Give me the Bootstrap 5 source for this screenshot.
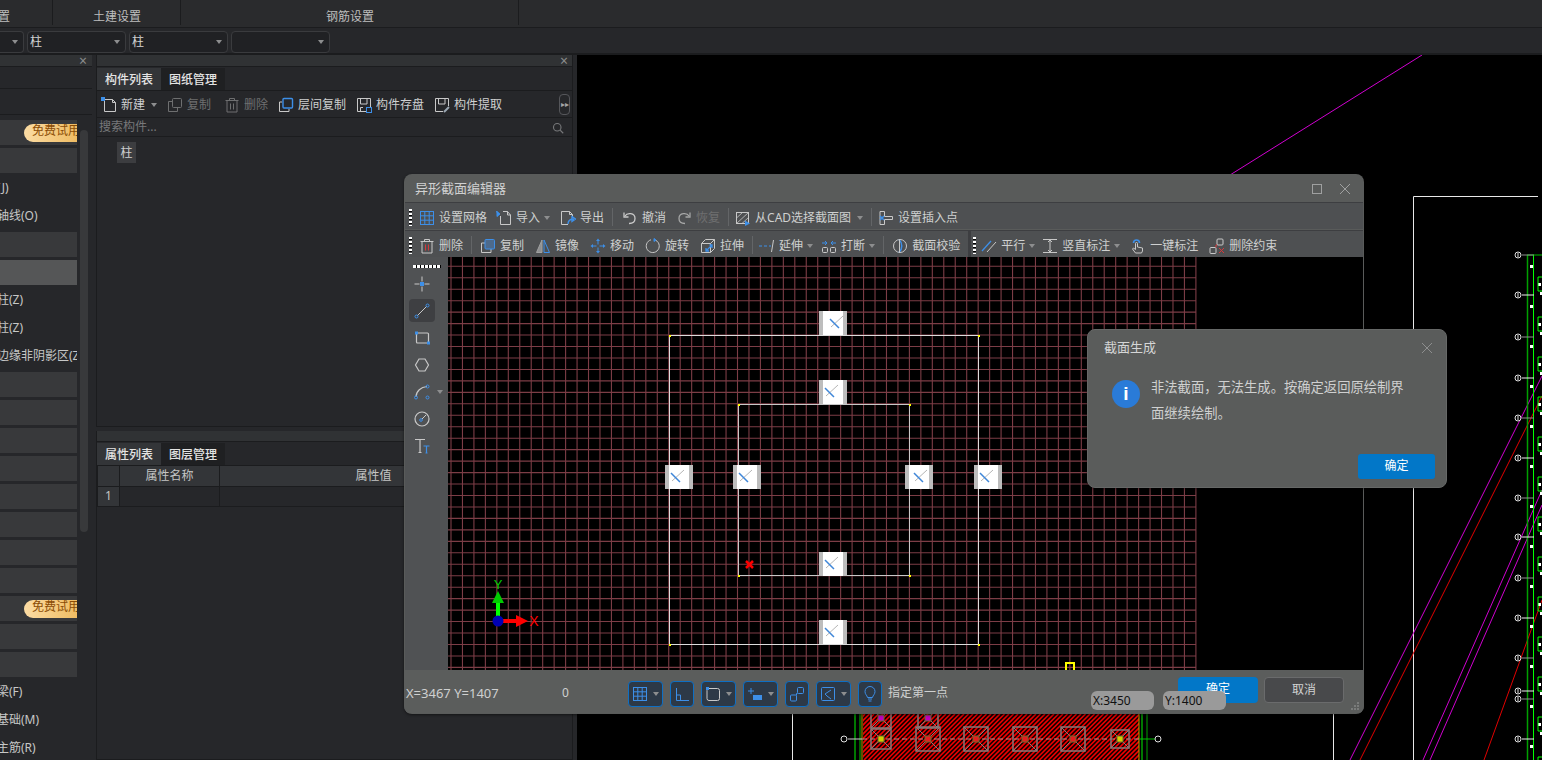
<!DOCTYPE html>
<html lang="zh-CN">
<head>
<meta charset="UTF-8" />
<title>异形截面编辑器</title>
<link href="https://cdn.jsdelivr.net/npm/bootstrap@5.3.0/dist/css/bootstrap.min.css" rel="stylesheet" />
<style>
  html, body { height: 760px; overflow: hidden; }
  body { background: #26272a; color: #cfd0d0; font: 12px/1.2 "Noto Sans", "Noto Sans CJK SC", sans-serif; }
  svg.ic { width: 16px; height: 16px; flex: none; fill: none; stroke: #c8c8c8; stroke-width: 1; }
  .app-root { position: relative; width: 1542px; height: 760px; overflow: hidden; }
  .top-tabs { height: 28px; background: #2a2b2d; border-bottom: 1px solid #1b1c1e; }
  .top-tabs > div { height: 25px; padding: 10px 0 0 1px; text-align: center; border-right: 1px solid #1b1c1e; color: #bdbebe; }
  .sel-row { height: 27px; gap: 3px; background: #26272a; border-bottom: 2px solid #1b1c1e; padding-top: 3px; }
  .fake-sel { height: 22px; width: 99px; background: #202124; border: 1px solid #3a3b3e; border-radius: 4px; padding: 0 5px 0 2px; color: #d5d5d5; }
  .fake-sel.first { width: 24px; border-left: 0; border-radius: 0 4px 4px 0; }
  .caret-s { width: 0; height: 0; border: 3px solid transparent; border-top: 4px solid #8d8e8f; border-bottom: 0; flex: none; }
  .main-row { height: 705px; gap: 4px; }
  .left-pane { width: 92px; }
  .left-pane > * { flex: none; }
  .pane-title { height: 12px; background: #303234; border-bottom: 1px solid #1b1c1e; color: #8b8c8d; padding-right: 4px; font-size: 14px; line-height: 11px; }
  .left-head { height: 26px; border-bottom: 1px solid #1b1c1e; }
  .left-rows { width: 77px; padding-top: 5px; }
  .left-item { height: 25px; margin-bottom: 3px; background: #38393b; overflow: hidden; white-space: nowrap; }
  .left-item.plain { background: transparent; color: #c6c7c7; }
  .left-item.on { background: #555657; }
  .cut-txt { margin-left: -3px; }
  .try-badge { width: 53px; height: 18px; padding-left: 8px; background: linear-gradient(90deg, #fbdca4, #efbc63); border-radius: 9px 0 0 9px; color: #8b4c05; overflow: hidden; white-space: nowrap; }
  .left-thumb { width: 8px; height: 402px; margin: 15px 0 0 3px; background: #38393b; border-radius: 4px; }
  .mid-col { width: 477px; gap: 4px; }
  .mid-pane { border: 1px solid #1b1c1e; border-width: 0 1px 1px 1px; }
  .tab-row { height: 23px; border-bottom: 1px solid #1b1c1e; margin-top: 1px; }
  .tab-on, .tab-off { width: 64px; text-align: center; line-height: 23px; color: #e4e4e4; font-weight: 500; }
  .tab-on { background: #333538; }
  .tab-off { background: #1f2022; }
  .mid-tools { height: 27px; gap: 10px; padding: 2px 0 0 4px; border-bottom: 1px solid #1b1c1e; }
  .tool { gap: 4px; white-space: nowrap; }
  .tool.off { color: #6e6f70; }
  .more-btn { width: 11px; height: 21px; border: 1px solid #55565a; border-radius: 4px; color: #a5a5a5; font-size: 8px; line-height: 18px; text-align: center; margin: -2px 2px 0 0; }
  .search-row { height: 19px; padding: 1px 8px 0 2px; border-bottom: 1px solid #1b1c1e; color: #77787a; }
  .comp-chip { width: 19px; height: 21px; margin: 5px 0 0 20px; background: #3c3d40; text-align: center; line-height: 21px; }
  .prop-table { border-collapse: collapse; width: 100%; }
  .prop-table td, .prop-table th { height: 20px; padding: 0; border: 1px solid #1b1c1e; border-top: 0; text-align: center; font-weight: 400; color: #c4c5c5; }
  .prop-table .rownum { width: 22px; background: #333538; }
  .prop-table th { background: #333538; }
  .cad-area { background: #000; position: relative; overflow: hidden; }
  .cad-area svg { position: absolute; left: 0; top: 0; }
  .shape-win { position: absolute; left: 404px; top: 174px; width: 960px; height: 540px; background: #595b5a; border-radius: 8px; box-shadow: 0 1px 3px rgba(0,0,0,.5); overflow: hidden; }
  .win-title { height: 29px; padding: 0 13px 0 11px; color: #d0d1d1; font-size: 13px; }
  .win-ctl { stroke: #9fa0a0; fill: none; }
  .tool-row { height: 26px; margin: 0 1px 2px 1px; gap: 8px; padding: 4px 0 0 4px; background: #4e5052; box-shadow: 0 -1px 0 #3d3e41; }
  .tool-row.wide { gap: 9px; }
  .grip-dots { width: 3px; height: 17px; flex: none; margin-top: -2px; background: repeating-linear-gradient(180deg, #fff 0 2px, #000 2px 3px, transparent 3px 4px); }
  .grip-first { margin-right: -2px; }
  .grip-flat { margin-right: -1px; }
  .grip-second { margin-right: -3px; }
  .tb-sep { width: 1px; height: 18px; background: #636567; flex: none; margin-top: -2px; }
  .wide .tb-sep { margin-left: -1px; }
  .tb-break { width: 3px; height: 26px; background: #3d3e41; flex: none; margin: -4px -6px 0 0; }
  .sp1 { margin-left: 1px; }
  .sp2 { margin-left: 2px; }
  .sp3 { margin-left: 3px; }
  .pull1 { margin-left: -1px; }
  .pull2 { margin-left: -2px; }
  .pull3 { margin-left: -3px; }
  .canvas-row { height: 413px; margin: -2px 1px 0 1px; }
  .tool-strip { width: 43px; background: #505254; flex: none; padding-top: 8px; }
  .strip-dots { height: 3px; width: 28px; margin: 0 0 2px 8px; background: repeating-linear-gradient(90deg, #fff 0 3px, #000 3px 4px); }
  .strip-btn { height: 27px; width: 26px; margin-left: 4px; position: relative; }
  .strip-btn.on { background: #3e3f42; border-radius: 4px; height: 23px; margin: 2px 0 2px 4px; }
  .strip-caret { position: absolute; left: 28px; top: 12px; }
  .stat-row { height: 43px; padding-top: 4px; background: #5b5d5c; position: relative; }
  .stat-xy { margin-left: 2px; width: 156px; font-size: 13px; }
  .stat-btns { gap: 7px; }
  .stat-btn { height: 26px; padding: 0 3px; gap: 5px; background: #2d3947; border: 1px solid #0e6fc4; border-radius: 4px; }
  .stat-btn svg.ic { stroke: #3d8fe8; }
  .stat-hint { margin-left: 6px; }
  .stat-acts { gap: 6px; margin: -8px 20px 0 auto; }
  .btn-ok, .btn-no { width: 80px; height: 26px; line-height: 24px; text-align: center; border-radius: 4px; font-size: 12px; }
  .btn-ok { background: #0277c8; color: #fff; }
  .btn-no { background: #48494b; border: 1px solid #6a6b6c; color: #d2d2d2; }
  .coord-tip { position: absolute; top: 21px; width: 63px; height: 19px; padding-left: 2px; background: #9a9a9a; border-radius: 6px; color: #111; line-height: 19px; }
  .size-grip { position: absolute; right: 4px; bottom: 2px; }
  .msg-box { position: absolute; left: 1087px; top: 329px; width: 360px; height: 159px; background: #5a5c5b; border: 1px solid #666867; border-radius: 8px; color: #cfd0d0; box-shadow: 0 1px 3px rgba(0,0,0,.4); }
  .msg-title { height: 36px; padding: 0 13px 0 16px; font-size: 13px; color: #d5d6d6; }
  .msg-body { height: 88px; padding: 12px 10px 0 24px; gap: 11px; }
  .msg-icon { width: 28px; height: 28px; border-radius: 50%; background: #2a7bd8; color: #fff; font: 700 19px/28px "Liberation Sans", sans-serif; text-align: center; margin-top: 2px; }
  .msg-text { line-height: 26px; font-size: 13.3px; margin-top: -4px; max-width: 262px; }
  .msg-foot { padding-right: 11px; }
  .msg-foot .btn-ok { width: 77px; height: 25px; border-radius: 3px; }
</style>
</head>
<body>
<div class="app-root d-flex flex-column">
  <div class="top-tabs d-flex flex-none">
    <div style="width:53px"><span class="cut-txt d-block text-start">置</span></div>
    <div style="width:128px">土建设置</div>
    <div style="width:338px">钢筋设置</div>
  </div>
  <div class="sel-row d-flex flex-none">
    <div class="fake-sel first d-flex align-items-center justify-content-end"><i class="caret-s"></i></div>
    <div class="fake-sel d-flex align-items-center justify-content-between">柱<i class="caret-s"></i></div>
    <div class="fake-sel d-flex align-items-center justify-content-between">柱<i class="caret-s"></i></div>
    <div class="fake-sel d-flex align-items-center justify-content-end"><i class="caret-s"></i></div>
  </div>

  <div class="main-row d-flex">
    <div class="left-pane d-flex flex-column flex-none">
      <div class="pane-title text-end" style="padding-right:5px">×</div>
      <div class="left-head" style="height:22px"></div>
      <div class="left-head"></div>
      <div class="d-flex">
        <div class="left-rows" id="leftRows"></div>
        <div class="left-thumb"></div>
      </div>
    </div>

    <div class="mid-col d-flex flex-column flex-none">
      <div class="mid-pane" style="height:372px">
        <div class="pane-title text-end">×</div>
        <div class="tab-row d-flex"><div class="tab-on">构件列表</div><div class="tab-off">图纸管理</div></div>
        <div class="mid-tools d-flex align-items-center">
          <span class="tool d-flex align-items-center">
            <svg class="ic" viewBox="0 0 16 16"><path d="M3.5 2.5h8l3 3v9h-11z"/><path d="M11.5 2.5v3h3" /><rect x="0" y="0" width="4" height="4" fill="#3d8fe8" stroke="none"/></svg>新建<i class="caret-s sp2"></i>
          </span>
          <span class="tool off d-flex align-items-center">
            <svg class="ic" viewBox="0 0 16 16" style="stroke:#6e6f70"><rect x="5.5" y="1.5" width="9" height="9" rx="1"/><path d="M5 4.5H1.5v10h9V11"/></svg>复制
          </span>
          <span class="tool off d-flex align-items-center sp3">
            <svg class="ic" viewBox="0 0 16 16" style="stroke:#6e6f70"><path d="M1.5 3.5h13M5.5 3V1.5h5V3M3 4v11h10V4M6.5 6.5v6M9.5 6.5v6"/></svg>删除
          </span>
          <span class="tool d-flex align-items-center">
            <svg class="ic" viewBox="0 0 16 16"><path d="M4 5H1.5v9.5H11V12"/><rect x="5" y="1.5" width="9.5" height="9.5" rx="1" stroke="#3d8fe8" stroke-width="1.4"/></svg>层间复制
          </span>
          <span class="tool d-flex align-items-center">
            <svg class="ic" viewBox="0 0 16 16"><path d="M10 14.5H1.5v-13h13V10"/><path d="M4.5 2v5h6.5V2M7 10.5H4.5v4"/><rect x="10.5" y="10.5" width="5" height="5" stroke="#3d8fe8"/></svg>构件存盘
          </span>
          <span class="tool d-flex align-items-center">
            <svg class="ic" viewBox="0 0 16 16"><path d="M9 14.5H1.5v-13h13V9"/><path d="M4.5 2v5h6.5V2"/><path d="M15 10l-5 5" stroke="#9aa6b2" stroke-width="2"/></svg>构件提取
          </span>
          <div class="more-btn ms-auto">▸▸</div>
        </div>
        <div class="search-row d-flex align-items-center justify-content-between">搜索构件...
          <svg class="ic" viewBox="0 0 16 16" style="stroke:#77787a;width:12px;height:12px"><circle cx="7" cy="7" r="5" stroke-width="1.5"/><path d="M11 11l4 4" stroke-width="1.5"/></svg>
        </div>
        <div class="comp-chip">柱</div>
      </div>
      <div class="mid-pane flex-grow-1">
        <div class="pane-title" style="height:11px"></div>
        <div class="tab-row d-flex"><div class="tab-on">属性列表</div><div class="tab-off">图层管理</div></div>
        <table class="prop-table">
          <tr><th class="rownum"></th><th style="width:100px">属性名称</th><th style="padding-right:44px">属性值</th></tr>
          <tr><td class="rownum">1</td><td></td><td></td></tr>
        </table>
      </div>
    </div>

    <div class="cad-area flex-grow-1">
      <svg id="cadBack" width="965" height="705" viewBox="577 55 965 705"></svg>
    </div>
  </div>

  <!-- section editor window -->
  <div class="shape-win d-flex flex-column">
    <div class="win-title d-flex align-items-center justify-content-between flex-none">
      <span>异形截面编辑器</span>
      <span class="d-flex gap-3">
        <svg width="12" height="12" viewBox="0 0 12 12" class="win-ctl"><rect x="1.5" y="1.5" width="9" height="9"/></svg>
        <svg width="12" height="12" viewBox="0 0 12 12" class="win-ctl"><path d="M1 1l10 10M11 1L1 11"/></svg>
      </span>
    </div>

    <div class="tool-row wide d-flex align-items-center flex-none">
      <i class="grip-dots grip-first"></i>
      <span class="tool d-flex align-items-center">
        <svg class="ic" viewBox="0 0 16 16" style="stroke:#3d8fe8"><rect x="1.5" y="1.5" width="13" height="13"/><path d="M5.8 1.5v13M10.2 1.5v13M1.5 5.8h13M1.5 10.2h13"/></svg>设置网格
      </span>
      <span class="tool d-flex align-items-center">
        <svg class="ic" viewBox="0 0 16 16"><path d="M4.5 6v8.5h10V5l-3-3.5H7"/><path d="M11.5 1.5V5h3"/><path d="M1 1.5l3 2.5-3 2.5z M0 1l3 4" stroke="#3d8fe8" fill="#3d8fe8"/></svg>导入<i class="caret-s"></i>
      </span>
      <span class="tool d-flex align-items-center sp1">
        <svg class="ic" viewBox="0 0 16 16"><path d="M8 14.5H1.5v-13h8l3 3v3"/><path d="M9.5 1.5v3h3"/><path d="M8 14c0-4 3-5 6-5M12 6.5l3.5 2.5-3.5 2.5z" stroke="#3d8fe8" stroke-width="1.4"/></svg>导出
      </span>
      <i class="tb-sep"></i>
      <span class="tool d-flex align-items-center">
        <svg class="ic" viewBox="0 0 16 16"><path d="M3 6c2-3.500 10-3.500 10 2.500 0 3.500-3 5-6 5" stroke-width="1.3"/><path d="M2 2.500V7h4.500" stroke-width="1.3"/></svg>撤消
      </span>
      <span class="tool off d-flex align-items-center sp1">
        <svg class="ic" viewBox="0 0 16 16" style="stroke:#a5a6a6"><path d="M13 6C11 2.500 3 2.500 3 8.500c0 3.500 3 5 6 5" stroke-width="1.3"/><path d="M14 2.500V7H9.500" stroke-width="1.3"/></svg>恢复
      </span>
      <i class="tb-sep"></i>
      <span class="tool d-flex align-items-center pull3">
        <svg class="ic" viewBox="0 0 16 16"><rect x="1.5" y="2.5" width="12" height="11"/><path d="M1.5 13.5l12-11M1.500 8l6-5.500M7 13.500l6.500-6" stroke-width=".8"/><path d="M10 10.500l5 3-5 2.500z" fill="#3d8fe8" stroke="none"/></svg>从CAD选择截面图<i class="caret-s sp2"></i>
      </span>
      <i class="tb-sep"></i>
      <span class="tool d-flex align-items-center pull3">
        <svg class="ic" viewBox="0 0 16 16"><path d="M2 1.500h4.500v5h8v3h-8v5H2z"/><path d="M2 6l4 4M6 6l-4 4" stroke="#3d8fe8" stroke-width="1.5"/></svg>设置插入点
      </span>
    </div>

    <div class="tool-row d-flex align-items-center flex-none">
      <i class="grip-dots grip-flat"></i>
      <span class="tool d-flex align-items-center">
        <svg class="ic" viewBox="0 0 16 16"><path d="M1.500 3.500h13M5.500 3V1.500h5V3M3 4v11h10V4"/><path d="M6.500 6.500v6M9.500 6.500v6" stroke="#d8383c"/></svg>删除
      </span>
      <i class="tb-sep"></i>
      <span class="tool d-flex align-items-center">
        <svg class="ic" viewBox="0 0 16 16"><path d="M5 5H1.500v9.500H11V11"/><rect x="5" y="1.500" width="9.500" height="9.500" rx="1" fill="#4d6a8c" stroke="#3d8fe8"/></svg>复制
      </span>
      <span class="tool d-flex align-items-center sp3">
        <svg class="ic" viewBox="0 0 16 16"><path d="M7 2L1.500 14.500H7z" fill="#8f9091" stroke="#a0a1a1"/><path d="M9 2l5.500 12.500H9z" stroke="#3d8fe8"/></svg>镜像
      </span>
      <span class="tool d-flex align-items-center sp3">
        <svg class="ic" viewBox="0 0 16 16" style="stroke:#3d8fe8"><path d="M8 2.500v4M8 9.500v4M2.500 8h4M9.500 8h4"/><path d="M6 3l2-2.500L10 3zM6 13l2 2.500L10 13zM3 6L.5 8 3 10zM13 6l2.500 2L13 10z" fill="#3d8fe8" stroke="none"/></svg>移动
      </span>
      <span class="tool d-flex align-items-center sp3">
        <svg class="ic" viewBox="0 0 16 16"><path d="M9.500 1.800a6.500 6.500 0 1 1-3.500 0"/><path d="M9 .5l2 1.500-2 1.500z" fill="#3d8fe8" stroke="#3d8fe8"/></svg>旋转
      </span>
      <span class="tool d-flex align-items-center sp3">
        <svg class="ic" viewBox="0 0 16 16"><path d="M1.500 5.500h9v9h-9zM1.500 5.500l4-4h9v9l-4 4M10.500 5.500l4-4"/><path d="M6 13l6-6M6 10v3h3M9.500 7H12v3" stroke="#3d8fe8" stroke-width="1.3"/></svg>拉伸
      </span>
      <i class="tb-sep"></i>
      <span class="tool d-flex align-items-center pull2">
        <svg class="ic" viewBox="0 0 16 16"><path d="M0 8h3M5 8h3M10 8h2" stroke="#3d8fe8"/><path d="M14.500 2l-2 12"/></svg>延伸<i class="caret-s"></i>
      </span>
      <span class="tool d-flex align-items-center">
        <svg class="ic" viewBox="0 0 16 16"><rect x="1.500" y="9.500" width="5" height="5" rx="1"/><rect x="9.500" y="9.500" width="5" height="5" rx="1"/><path d="M1 5h4M4 3l2 2-2 2M15 5h-4M12 3l-2 2 2 2" stroke="#3d8fe8"/></svg>打断<i class="caret-s"></i>
      </span>
      <i class="tb-sep"></i>
      <span class="tool d-flex align-items-center">
        <svg class="ic" viewBox="0 0 16 16"><rect x="1.500" y="1.500" width="13" height="13" rx="6.500"/><path d="M7 1.500a9 9 0 0 1 0 13" stroke="#3d8fe8" stroke-width="1.5"/><path d="M7.500 1v14"/></svg>截面校验
      </span>
      <i class="tb-break"></i>
      <i class="grip-dots grip-second"></i>
      <span class="tool d-flex align-items-center">
        <svg class="ic" viewBox="0 0 16 16"><path d="M1 13L10 3" stroke="#3d8fe8" stroke-width="1.3"/><path d="M6 14l9-10"/></svg>平行<i class="caret-s"></i>
      </span>
      <span class="tool d-flex align-items-center pull1">
        <svg class="ic" viewBox="0 0 16 16"><path d="M1 1.500h14M1 14.500h14M8 2v12"/><path d="M6 4l2-2 2 2M6 12l2 2 2-2"/></svg>竖直标注<i class="caret-s"></i>
      </span>
      <span class="tool d-flex align-items-center sp2">
        <svg class="ic" viewBox="0 0 16 16"><path d="M5.500 15l-3-4 1-1 2 1.500V5.500a1 1 0 0 1 2 0V9l5 1v3l-1 2z"/><path d="M3.500 5a3 3 0 1 1 6 0" stroke="#3d8fe8" stroke-width="1.6"/></svg>一键标注
      </span>
      <span class="tool d-flex align-items-center sp3">
        <svg class="ic" viewBox="0 0 16 16"><rect x="1" y="9.500" width="6" height="6" rx="1"/><rect x="8" y="1" width="6" height="6" rx="1"/><path d="M7 9.500V7h1M10 10l5 5M15 10l-5 5" stroke="#d8383c"/></svg>删除约束
      </span>
    </div>

    <div class="canvas-row d-flex">
      <div class="tool-strip">
        <div class="strip-dots"></div>
        <div class="strip-btn d-flex align-items-center justify-content-center">
          <svg class="ic" viewBox="0 0 16 16"><path d="M8 .5v5M8 10.500v5M.5 8h5M10.500 8h5"/><rect x="6" y="6" width="4" height="4" fill="#3d8fe8" stroke="none"/></svg>
        </div>
        <div class="strip-btn on d-flex align-items-center justify-content-center">
          <svg class="ic" viewBox="0 0 16 16"><path d="M3 13L13 3"/><circle cx="2.500" cy="13.500" r="1.500" stroke="#3d8fe8"/><circle cx="13.500" cy="2.500" r="1.500" stroke="#3d8fe8"/></svg>
        </div>
        <div class="strip-btn d-flex align-items-center justify-content-center">
          <svg class="ic" viewBox="0 0 16 16"><rect x="2.500" y="3" width="12" height="10" rx="1" stroke-width="1.2"/><rect x="1.500" y="2" width="2" height="2" stroke="#3d8fe8"/><rect x="13.500" y="12" width="2" height="2" stroke="#3d8fe8"/></svg>
        </div>
        <div class="strip-btn d-flex align-items-center justify-content-center">
          <svg class="ic" viewBox="0 0 16 16"><path d="M5 2h6l3.500 6L11 14H5L1.500 8z" stroke-width="1.2"/></svg>
        </div>
        <div class="strip-btn d-flex align-items-center justify-content-center">
          <svg class="ic" viewBox="0 0 16 16"><path d="M2 13C2 7 7 3 13 2.500" stroke-width="1.2"/><circle cx="2" cy="13.500" r="1.500" stroke="#3d8fe8"/><circle cx="13.500" cy="2.500" r="1.500" stroke="#3d8fe8"/><circle cx="13.500" cy="13.500" r="1.500" stroke="#3d8fe8"/></svg>
          <i class="caret-s strip-caret"></i>
        </div>
        <div class="strip-btn d-flex align-items-center justify-content-center">
          <svg class="ic" viewBox="0 0 16 16"><circle cx="8" cy="8" r="7" stroke-width="1.2"/><path d="M8 8l4-4"/><circle cx="7" cy="9" r="1.300" stroke="#3d8fe8"/></svg>
        </div>
        <div class="strip-btn d-flex align-items-center justify-content-center">
          <svg class="ic" viewBox="0 0 16 16"><path d="M1 1.500h10M6 1.500v13M4.500 14.500h3" stroke-width="1.2"/><path d="M9.500 8h6M12.500 8v7M11.500 15h2" stroke="#3d8fe8" stroke-width="1.2"/></svg>
        </div>
      </div>
      <svg id="gridCanvas" width="915" height="413" viewBox="448 258 915 413" style="background:#000;flex:none"></svg>
    </div>

    <div class="stat-row d-flex align-items-center flex-none">
      <span class="stat-xy">X=3467 Y=1407</span>
      <span style="width:66px">0</span>
      <span class="stat-btns d-flex align-items-center">
        <span class="stat-btn d-flex align-items-center"><svg class="ic" viewBox="0 0 16 16"><rect x="1.500" y="1.500" width="13" height="13"/><path d="M5.800 1.500v13M10.200 1.500v13M1.500 5.800h13M1.500 10.200h13"/></svg><i class="caret-s"></i></span>
        <span class="stat-btn d-flex align-items-center"><svg class="ic" viewBox="0 0 16 16"><path d="M2.500 2v12.500H15M2.500 9h4v5.500"/></svg></span>
        <span class="stat-btn d-flex align-items-center"><svg class="ic" viewBox="0 0 16 16"><rect x="2" y="2.500" width="12.500" height="12" rx="2" style="stroke:#c8c8c8"/><rect x="1" y="1" width="3" height="3" fill="#3d8fe8" stroke="none"/></svg><i class="caret-s"></i></span>
        <span class="stat-btn d-flex align-items-center"><svg class="ic" viewBox="0 0 16 16"><path d="M1 5h6M4 2v6"/><rect x="6" y="9" width="9" height="5" fill="#3d8fe8" stroke="none"/></svg><i class="caret-s"></i></span>
        <span class="stat-btn d-flex align-items-center"><svg class="ic" viewBox="0 0 16 16"><rect x="1.500" y="9" width="6" height="6" rx="1"/><rect x="8.500" y="1.500" width="6" height="6" rx="1"/><path d="M7.500 9V7.500h1"/></svg></span>
        <span class="stat-btn d-flex align-items-center"><svg class="ic" viewBox="0 0 16 16"><rect x="1.500" y="1.500" width="13" height="13" rx="1"/><path d="M5 8l2 2M5 8l6-4M7 10l4 3"/></svg><i class="caret-s"></i></span>
        <span class="stat-btn d-flex align-items-center"><svg class="ic" viewBox="0 0 16 16"><path d="M5.500 11.500C5 9 3 8.500 3 5.500a5 5 0 0 1 10 0c0 3-2 3.500-2.500 6zM6 13h4M6.500 15h3"/></svg></span>
      </span>
      <span class="stat-hint">指定第一点</span>
      <span class="stat-acts d-flex">
        <span class="btn-ok">确定</span>
        <span class="btn-no">取消</span>
      </span>
      <span class="coord-tip" style="left:687px">X:3450</span>
      <span class="coord-tip" style="left:759px">Y:1400</span>
      <svg class="size-grip" width="10" height="9" viewBox="0 0 10 9" fill="#7a7c7b"><rect x="7" y="0" width="2" height="2"/><rect x="4" y="3" width="2" height="2"/><rect x="7" y="3" width="2" height="2"/><rect x="1" y="6" width="2" height="2"/><rect x="4" y="6" width="2" height="2"/><rect x="7" y="6" width="2" height="2"/></svg>
    </div>
  </div>

  <!-- message box -->
  <div class="msg-box d-flex flex-column">
    <div class="msg-title d-flex align-items-center justify-content-between">
      <span>截面生成</span>
      <svg width="12" height="12" viewBox="0 0 12 12" class="win-ctl" style="stroke:#8d8e8e"><path d="M1 1l10 10M11 1L1 11"/></svg>
    </div>
    <div class="msg-body d-flex">
      <div class="msg-icon flex-none">i</div>
      <div class="msg-text">非法截面，无法生成。按确定返回原绘制界面继续绘制。</div>
    </div>
    <div class="msg-foot d-flex justify-content-end"><span class="btn-ok">确定</span></div>
  </div>
</div>

<script>
  const leftCenters = [
    ["badge"], ["band"], ["text", "(J)"], ["text", "轴线(O)"], ["band"], ["on"],
    ["text", "柱(Z)"], ["text", "柱(Z)"], ["text", "边缘非阴影区(Z)"],
    ["band"], ["band"], ["band"], ["band"], ["band"], ["band"], ["band"], ["band"],
    ["badge"], ["band"], ["band"], ["text", "梁(F)"], ["text", "基础(M)"], ["text", "主筋(R)"],
  ];
  document.getElementById("leftRows").innerHTML = leftCenters
    .map(([kind, label]) => {
      if (kind === "badge")
        return `<div class="left-item d-flex align-items-center justify-content-end"><span class="try-badge">免费试用</span></div>`;
      if (kind === "text")
        return `<div class="left-item plain d-flex align-items-center"><span class="cut-txt">${label}</span></div>`;
      return `<div class="left-item ${kind === "on" ? "on" : ""}"></div>`;
    })
    .join("");

  // grid, section outlines and axis inside the editor
  let g = "";
  const step = 11.46;
  for (let i = 0; i <= 65; i++) {
    const x = 451 + i * step;
    g += `<line x1="${x}" y1="258" x2="${x}" y2="671" stroke="#7c3d46" stroke-width="1.1"/>`;
  }
  for (let i = 0; i <= 35; i++) {
    const y = 267.3 + i * step;
    g += `<line x1="448" y1="${y}" x2="1196" y2="${y}" stroke="#7c3d46" stroke-width="1.1"/>`;
  }
  g += `<rect x="669.5" y="336.5" width="309" height="309" fill="none" stroke="#dcdcdc"/>`;
  g += `<rect x="738.5" y="405.5" width="171" height="171" fill="none" stroke="#c8c8c8"/>`;
  [[669, 336], [978, 336], [669, 645], [978, 645], [738, 405], [909, 405], [738, 576], [909, 576]].forEach(([x, y]) => {
    g += `<rect x="${x}" y="${y}" width="2" height="2" fill="#ff0"/>`;
  });
  [[833, 324, 5], [833, 393, 0], [679, 478, 0], [747, 478, 0], [919, 478, 3], [988, 478, 0], [833, 565, 0], [833, 633, 0]].forEach(([x, y, d]) => {
    g += `<rect x="${x - 14}" y="${y - 12}" width="28" height="24" fill="#bdbdbd"/>`;
    g += `<rect x="${x - 10}" y="${y - 12}" width="20" height="24" fill="#fff"/>`;
    g += `<path d="M${x - 7 + d} ${y + 4}L${x + 5 + d} ${y - 7}" stroke="#b5b5b5"/>`;
    g += `<path d="M${x - 8 + d} ${y - 4}L${x + 1 + d} ${y + 5}" stroke="#3f86d8" stroke-width="1.5"/>`;
  });
  g += `<path d="M746 562l7 7M753 562l-7 7" stroke="#f00" stroke-width="2.5"/>`;
  g += `<rect x="1066" y="664" width="8" height="12" fill="none" stroke="#ff0" stroke-width="2"/>`;
  g += `<path d="M498 622V600" stroke="#0f0" stroke-width="4"/><path d="M492 604l6-12 6 12z" fill="#0c0"/>`;
  g += `<path d="M498 622H520" stroke="#f00" stroke-width="4"/><path d="M516 616l12 6-12 6z" fill="#f00"/>`;
  g += `<circle cx="498" cy="622" r="5.5" fill="#0000b4"/>`;
  g += `<text x="498" y="590" text-anchor="middle" fill="#0c0" font-family="Liberation Sans" font-size="13">Y</text>`;
  g += `<text x="534" y="627" text-anchor="middle" fill="#f00" font-family="Liberation Sans" font-size="14">X</text>`;
  document.getElementById("gridCanvas").innerHTML = g;

  // CAD drawing behind the windows
  let c = "";
  const ln = (x1, y1, x2, y2, col, w = 1) => `<line x1="${x1}" y1="${y1}" x2="${x2}" y2="${y2}" stroke="${col}" stroke-width="${w}"/>`;
  c += ln(1422, 55, 1230, 175, "#d000d0");
  c += `<path d="M1413.5 760V196.5H1538M792.5 714V760M1333.5 714V760" fill="none" stroke="#e8e8e8"/>`;
  c += ln(1350, 760, 1542, 376, "#d000d0") + ln(1360, 760, 1542, 396, "#e00000");
  c += ln(1423, 760, 1542, 490, "#d000d0") + ln(1430, 760, 1542, 505, "#d000d0") + ln(1484, 760, 1542, 600, "#e00000");
  c += ln(1527.5, 255, 1527.5, 760, "#00a000", 1.5) + ln(1533.5, 255, 1533.5, 760, "#00ff00");
  c += ln(1527, 255, 1542, 255, "#00c000");
  [255, 295, 337, 378, 418, 458, 498, 537, 578, 618, 658, 691, 699, 739].forEach((y, i) => {
    c += ln(1522, y, 1534, y, i % 2 ? "#f0f0f0" : "#909090");
    c += `<circle cx="1518" cy="${y}" r="3" fill="#000" stroke="#e0e0e0"/>`;
    c += `<rect x="1517.5" y="${y - 2}" width="1" height="4" fill="#e0e0e0"/>`;
  });
  for (let y = 265; y < 760; y += 40) {
    c += `<rect x="1530" y="${y}" width="3" height="3" fill="#fff"/>`;
    c += `<rect x="1538" y="${y + 18}" width="3" height="3" fill="#fff"/><rect x="1540" y="${y + 27}" width="2" height="3" fill="#fff"/>`;
    c += `<path d="M1542 ${y + 12}h-4v14h4" fill="none" stroke="#0f0"/>`;
  }
  // hatched foundation strip
  c += `<clipPath id="hatchClip"><rect x="863" y="714" width="276" height="46"/></clipPath>`;
  c += `<g clip-path="url(#hatchClip)"><rect x="863" y="714" width="276" height="46" fill="#100000"/>`;
  for (let x = 810; x < 1150; x += 4.5) c += ln(x, 760, x + 46, 714, "#f00000", 1.6);
  c += `</g>`;
  c += ln(855, 714, 855, 760, "#00a000", 1.5) + ln(860, 714, 860, 760, "#00c000") + ln(862, 714, 862, 760, "#c0a000");
  c += ln(1139, 714, 1139, 760, "#c0a000") + ln(1142, 714, 1142, 760, "#00a000", 1.5) + ln(1147, 714, 1147, 760, "#00a000");
  c += ln(848, 739, 862, 739, "#d0d0d0") + ln(1139, 739, 1155, 739, "#00c000");
  c += `<line x1="862" y1="739" x2="1139" y2="739" stroke="#c09090" stroke-dasharray="5 3"/>`;
  [[844, 739], [1158, 739]].forEach(([x, y]) => {
    c += `<circle cx="${x}" cy="${y}" r="3" fill="#000" stroke="#e0e0e0"/>`;
  });
  [[881, 739, 10, "#d0d000"], [928, 739, 12, "#e02020"], [976, 739, 12, "#e02020"], [1025, 739, 12, "#e02020"], [1073, 739, 12, "#e02020"], [1120, 739, 9, "#d0d000"],
   [881, 718, 10, "#c000c0"], [928, 718, 10, "#c000c0"]].forEach(([x, y, r, col]) => {
    c += `<rect x="${x - r}" y="${y - r}" width="${2 * r}" height="${2 * r}" fill="none" stroke="#8a7a7a" stroke-width="1.5"/>`;
    c += `<path d="M${x - r} ${y - r}L${x + r} ${y + r}M${x + r} ${y - r}L${x - r} ${y + r}" stroke="#8a7a7a"/>`;
    c += `<rect x="${x - 3}" y="${y - 3}" width="6" height="6" fill="${col}" stroke="#6a6a30"/>`;
  });
  document.getElementById("cadBack").innerHTML = c;
</script>
<script src="https://cdn.jsdelivr.net/npm/bootstrap@5.3.0/dist/js/bootstrap.bundle.min.js"></script>
</body>
</html>
